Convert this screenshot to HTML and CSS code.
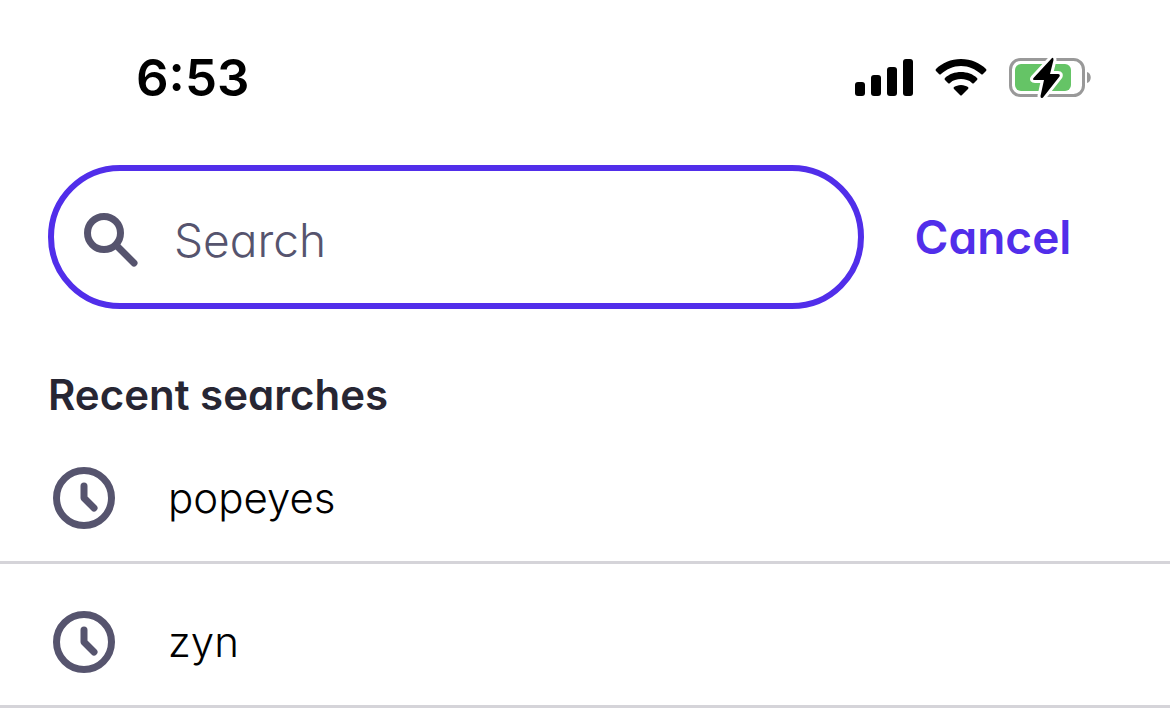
FILE: index.html
```html
<!doctype html>
<html lang="en">
    <head>
        <meta charset="UTF-8" />
        <meta name="viewport" content="width=device-width, initial-scale=1.0" />
        <title>Search</title>
        <link rel="stylesheet" href="styles.css">
    </head>
    <body>
        <header class="status-bar">
            <time class="clock">6:53</time>
            <div class="status-icons">
                <svg width="59" height="38" viewBox="0 0 59 38" aria-hidden="true">
                    <rect x="1" y="23" width="10" height="14" rx="3" />
                    <rect x="17" y="16" width="10" height="21" rx="3" />
                    <rect x="33" y="8" width="10" height="29" rx="3" />
                    <rect x="49" y="0" width="10" height="37" rx="3" />
                </svg>
                <svg width="52" height="38" viewBox="0 0 52 38" aria-hidden="true">
                    <path d="M26 0C16 0 7 4 1 10Q0 11 1 12L4 15Q5 16 6 15C12 10 18 7 26 7S40 10 46 15Q47 16 48 15L51 12Q52 11 51 10C45 4 36 0 26 0Z" />
                    <path d="M26 13C20 13 14 15 10 19Q9 20 10 21L13 24Q14 25 15 24C18 21 22 20 26 20S34 21 37 24Q38 25 39 24L42 21Q43 20 42 19C38 15 32 13 26 13Z" />
                    <path d="M26 26C23 26 21 27 19 28Q18 29 19 30L25 36Q26 37 27 36L33 30Q34 29 33 28C31 27 29 26 26 26Z" />
                </svg>
                <svg width="84" height="44" viewBox="0 0 84 44" aria-hidden="true">
                    <rect class="battery-case" x="1.5" y="3.5" width="73" height="36" rx="10" />
                    <path class="battery-cap" d="M78 16C83 17 83 26 78 27Z" />
                    <rect class="battery-level" x="6" y="8" width="56" height="27" rx="6" />
                    <path class="battery-bolt" d="M43 2L24.500 22Q23 24 26 24H35L31.500 40Q31.500 43 34 41.500L50.500 20.500Q51.500 18 49 18H41L44.500 4Q44.500 1 43 2Z" />
                </svg>
            </div>
        </header>

        <main>
            <form class="search-row">
                <label class="search-box">
                    <svg width="56" height="56" viewBox="0 0 56 56" aria-hidden="true">
                        <circle cx="20" cy="21" r="16.500" />
                        <path d="M33 34L50 51" />
                    </svg>
                    <input class="search-input" type="search" placeholder="Search" aria-label="Search" />
                </label>
                <button class="cancel" type="button">Cancel</button>
            </form>

            <h2 class="recent-title">Recent searches</h2>
            <ul class="recent-list">
                <li>
                    <a class="recent-item" href="#popeyes">
                        <svg width="62" height="62" viewBox="0 0 62 62" aria-hidden="true">
                            <circle cx="31" cy="31" r="27.500" />
                            <path d="M31 19V31L41 41" />
                        </svg>
                        popeyes
                    </a>
                </li>
                <li>
                    <a class="recent-item" href="#zyn">
                        <svg width="62" height="62" viewBox="0 0 62 62" aria-hidden="true">
                            <circle cx="31" cy="31" r="27.500" />
                            <path d="M31 19V31L41 41" />
                        </svg>
                        zyn
                    </a>
                </li>
            </ul>
        </main>
    </body>
</html>
```
FILE: styles.css
```css
* {
    box-sizing: border-box;
}

body {
    margin: 0;
    background-color: #fff;
    color: #000;
    font-family: Inter, "Liberation Sans", sans-serif;
    /* single-storey a */
    font-feature-settings: "cv11";
}

.status-bar {
    display: flex;
    justify-content: space-between;
    align-items: center;
    padding: 48px 77px 0 136px;
}

.clock {
    font-size: 51px;
    font-weight: 600;
    line-height: 60px;
}

.status-icons {
    display: flex;
    align-items: center;
    gap: 22px;
}

.battery-case {
    fill: none;
    stroke: #999;
    stroke-width: 3;
}

.battery-cap {
    fill: #999;
}

.battery-level {
    fill: #65c466;
}

.battery-bolt {
    stroke: #fff;
    stroke-width: 6;
    stroke-linejoin: round;
    paint-order: stroke;
}

.search-row {
    display: flex;
    align-items: center;
    padding: 57px 48px 0;
}

.search-box {
    display: flex;
    flex: 1;
    align-items: center;
    gap: 34px;
    min-width: 0;
    height: 144px;
    padding: 6px 30px 0;
    border: 6px solid #512eea;
    border-radius: 72px;
}

.search-box svg,
.recent-item svg {
    flex: none;
    fill: none;
    stroke: #56546e;
    stroke-width: 7;
    stroke-linecap: round;
    stroke-linejoin: round;
}

.search-input {
    flex: 1;
    min-width: 0;
    padding: 0;
    border: 0;
    outline: none;
    background: none;
    font: inherit;
    font-feature-settings: inherit;
    font-size: 46px;
    font-weight: 300;
    appearance: none;
}

.search-input::placeholder {
    color: #56546e;
}

.cancel {
    flex: 0 0 258px;
    padding: 0;
    border: 0;
    background: none;
    color: #512eea;
    font: inherit;
    font-feature-settings: inherit;
    font-size: 46px;
    font-weight: 600;
}

.recent-title {
    margin: 61px 48px 0;
    color: #272633;
    font-size: 42px;
    font-weight: 600;
    line-height: 50px;
}

.recent-list {
    margin: 0;
    padding: 0;
    list-style: none;
}

.recent-item {
    display: flex;
    align-items: center;
    gap: 53px;
    padding: 44px 53px 30px;
    border-bottom: 3px solid #d5d4d9;
    color: #000;
    font-size: 42px;
    font-weight: 300;
    line-height: 67px;
    text-decoration: none;
}
```
